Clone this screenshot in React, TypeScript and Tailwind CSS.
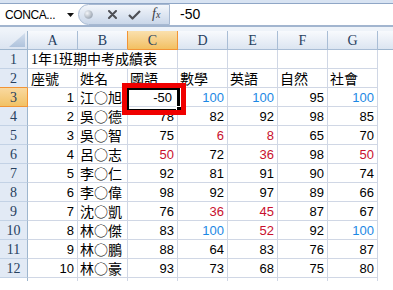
import React from 'react';

const cols = ['A', 'B', 'C', 'D', 'E', 'F', 'G'];

const rows: [number, string, number[]][] = [
  [1, '江○旭', [-50, 100, 100, 95, 100]],
  [2, '吳○德', [78, 82, 92, 98, 85]],
  [3, '吳○智', [75, 6, 8, 65, 70]],
  [4, '呂○志', [50, 72, 36, 98, 50]],
  [5, '李○仁', [92, 81, 91, 90, 74]],
  [6, '李○偉', [98, 92, 97, 89, 66]],
  [7, '沈○凱', [76, 36, 45, 87, 67]],
  [8, '林○傑', [83, 100, 52, 92, 100]],
  [9, '林○鵬', [88, 64, 83, 76, 87]],
  [10, '林○豪', [93, 73, 68, 75, 80]],
];

const heads = ['座號', '姓名', '國語', '數學', '英語', '自然', '社會'];

const hdr =
  "w-[50px] shrink-0 flex items-center justify-center pt-[1px] border-r border-b border-[#a9bdd5] bg-linear-to-b from-[#f8fafd] to-[#dce5f1] text-[14px] text-[#27415f] font-['Liberation_Serif',serif]";
const hdrB =
  "w-[50px] shrink-0 flex items-center justify-center pt-[1px] border-r border-b border-[#a9bdd5] border-r-[#f29436] bg-linear-to-b from-[#f8fafd] to-[#dce5f1] text-[14px] text-[#27415f] font-['Liberation_Serif',serif]";
const hdrSel =
  "w-[50px] shrink-0 flex items-center justify-center pt-[1px] border-r border-b border-[#f29436] bg-linear-to-b from-[#fae0ad] to-[#f2c061] text-[14px] text-[#27415f] font-['Liberation_Serif',serif]";

const rowHdr =
  "w-[28px] shrink-0 flex items-end justify-center pb-[1px] border-r border-b border-[#9eb6ce] border-b-[#c3d2e5] bg-[#e2eaf5] text-[14px] leading-[15px] text-[#27415f] font-['Liberation_Serif',serif]";
const rowHdrAbove =
  "w-[28px] shrink-0 flex items-end justify-center pb-[1px] border-r border-b border-[#9eb6ce] border-b-[#f29436] bg-[#e2eaf5] text-[14px] leading-[15px] text-[#27415f] font-['Liberation_Serif',serif]";
const rowHdrSel =
  "w-[28px] shrink-0 flex items-end justify-center pb-[1px] border-r border-b border-[#f29436] bg-linear-to-b from-[#f9d99f] to-[#f2c264] text-[14px] leading-[15px] text-[#27415f] font-['Liberation_Serif',serif]";

const numCell =
  "w-[50px] shrink-0 border-r border-b border-[#d0d7e5] flex items-end justify-end pr-[3px] pb-[2px] text-[13px] leading-[13px] font-['Liberation_Sans',Arial,sans-serif]";
const textCell =
  "w-[50px] shrink-0 border-r border-b border-[#d0d7e5] flex items-end pl-[2px] pb-[1px] text-[14px] leading-[15px] whitespace-nowrap font-['Noto_Sans_CJK_TC',sans-serif]";

const tone = (v: number, sel: boolean) => {
  if (sel) return 'text-black';
  if (v === 100) return 'text-[#1c88e4]';
  if (v < 60) return 'text-[#c8102e]';
  return 'text-black';
};

const Corner = () => (
  <div className="w-[28px] shrink-0 border-r border-b border-[#9eb6ce] bg-linear-to-b from-[#eef3f9] to-[#dbe4f0] flex items-end justify-end pr-[2px] pb-[2px]">
    <svg width="16" height="14" viewBox="0 0 16 14">
      <defs>
        <linearGradient id="tri" x1="0" y1="0" x2="0" y2="1">
          <stop offset="0" stopColor="#d2deed" />
          <stop offset="1" stopColor="#afc3dc" />
        </linearGradient>
      </defs>
      <polygon points="16,0 16,14 0,14" fill="url(#tri)" />
    </svg>
  </div>
);

function FormulaBar() {
  return (
    <>
      <div className="h-[3px] bg-[#d8e3f2]" />
      <div className="flex h-[24px] bg-white border-t border-[#8fa6c6] border-b-2 border-b-[#a2b5cf]">
        <div className="w-[62px] shrink-0 flex items-center pl-[5px] text-[12px] tracking-[-0.4px] text-black font-['Liberation_Sans',Arial,sans-serif]">
          CONCA...
        </div>
        <div className="w-[16px] shrink-0 flex items-center justify-center pt-[1px]">
          <svg width="7" height="4" viewBox="0 0 7 4">
            <polygon points="0,0 7,0 3.5,4" fill="#111" />
          </svg>
        </div>
        <div className="w-[92px] shrink-0 flex items-center pl-[5px] rounded-l-[11px] border border-[#a7b9d2] bg-linear-to-b from-[#f3f6fb] to-[#cad7e9]">
          <svg width="9" height="9" viewBox="0 0 9 9">
            <defs>
              <radialGradient id="knob" cx="0.35" cy="0.35" r="0.7">
                <stop offset="0" stopColor="#f4f6f9" />
                <stop offset="1" stopColor="#9aa4b1" />
              </radialGradient>
            </defs>
            <circle cx="4.5" cy="4.5" r="4.3" fill="url(#knob)" />
          </svg>
          <svg className="ml-[15px]" width="9" height="9" viewBox="0 0 9 9">
            <path d="M1 1L8 8M8 1L1 8" stroke="#4d4f55" strokeWidth="2" strokeLinecap="round" />
          </svg>
          <svg className="ml-[11px]" width="13" height="10" viewBox="0 0 13 10">
            <path d="M1 5L4.5 8.5L12 1" stroke="#4d4f55" strokeWidth="2.2" fill="none" strokeLinejoin="round" />
          </svg>
          <span className="ml-[11px] italic font-['Liberation_Serif',serif] text-[14px] leading-[14px] text-[#3a3d44]">
            f<span className="text-[10px]">x</span>
          </span>
        </div>
        <div className="flex-1 flex items-center pl-[10px] text-[14px] text-black font-['Liberation_Sans',Arial,sans-serif]">
          -50
        </div>
      </div>
      <div className="h-[4px] bg-[#eef3f9]" />
    </>
  );
}

export default function App() {
  return (
    <div className="relative w-[393px] h-[290px] overflow-hidden bg-white">
      <FormulaBar />

      <div className="flex h-[19px]">
        <Corner />
        {cols.map((c) => (
          <div key={c} className={c === 'C' ? hdrSel : c === 'B' ? hdrB : hdr}>
            {c}
          </div>
        ))}
        <div className="flex-1 border-b border-[#9eb6ce] bg-linear-to-b from-[#f8fafd] to-[#dce5f1]" />
      </div>

      <div className="flex h-[19px]">
        <div className={rowHdr}>1</div>
        <div className="w-[150px] shrink-0 border-r border-b border-[#d0d7e5] flex items-end pl-[3px] pb-[1px] text-[14px] leading-[15px] whitespace-nowrap font-['Liberation_Serif','Noto_Sans_CJK_TC',serif]">
          1年1班期中考成績表
        </div>
        {[0, 1, 2, 3].map((i) => (
          <div key={i} className={numCell} />
        ))}
      </div>

      <div className="flex h-[19px]">
        <div className={rowHdrAbove}>2</div>
        {heads.map((h, i) => (
          <div key={h} className={textCell + (i === 0 ? ' pl-[3px]' : '')}>
            {h}
          </div>
        ))}
      </div>

      {rows.map(([no, name, scores], r) => (
        <div key={no} className="flex h-[19px]">
          <div className={r === 0 ? rowHdrSel : rowHdr}>{r + 3}</div>
          <div className={numCell}>{no}</div>
          <div className={textCell}>{name}</div>
          {scores.map((v, i) => (
            <div key={i} className={numCell + ' ' + tone(v, r === 0 && i === 0) + (r === 0 && i === 0 ? ' pr-[5px]' : '')}>
              {v}
            </div>
          ))}
        </div>
      ))}

      <div className="flex h-[3px]">
        <div className="w-[28px] shrink-0 border-r border-[#9eb6ce]" />
        {cols.map((c) => (
          <div key={c} className="w-[50px] shrink-0 border-r border-[#d0d7e5]" />
        ))}
      </div>

      {/* active cell + annotation */}
      <div className="absolute left-[127px] top-[88px] w-[53px] h-[23px] border-2 border-r-[3px] border-black" />
      <div className="absolute left-[176px] top-[106px] w-[6px] h-[6px] bg-black border border-white" />
      <div className="absolute left-[122px] top-[83px] w-[64px] h-[32px] border-[5px] border-[#f00000]" />
    </div>
  );
}
